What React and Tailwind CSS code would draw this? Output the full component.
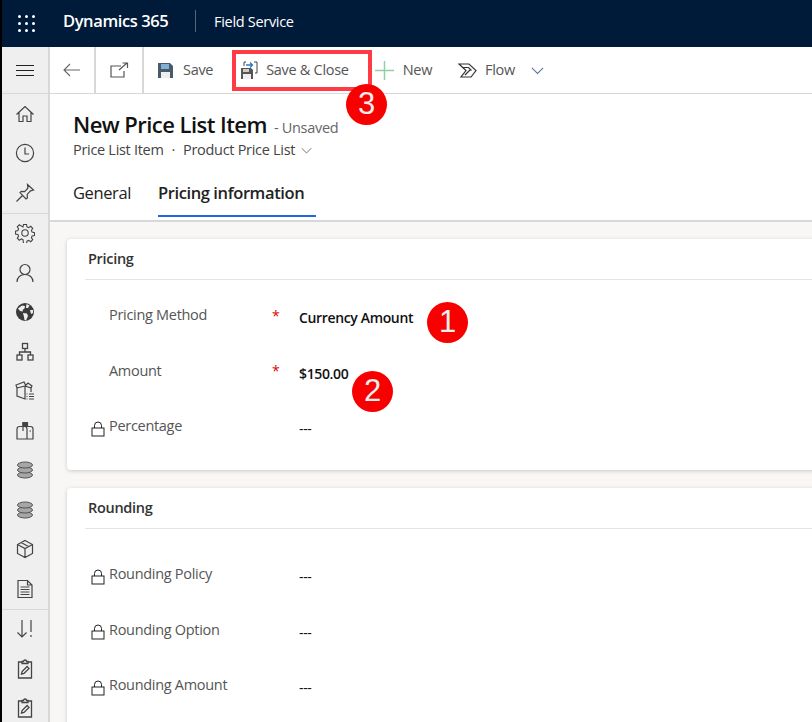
import React from 'react';

const font = { fontFamily: '"Open Sans", "Noto Sans", sans-serif' };

// sidebar icons, all drawn on a 20x20 box
function HomeIcon() {
  return (
    <svg width="20" height="20" viewBox="0 0 20 20" fill="none" stroke="#444" strokeWidth="1.2">
      <path d="M1.5 10.5 10 2.5l8.5 8M4 8.5V17.5h4V12h4v5.5h4V8.5" />
    </svg>
  );
}
function ClockIcon() {
  return (
    <svg width="20" height="20" viewBox="0 0 20 20" fill="none" stroke="#444" strokeWidth="1.2">
      <circle cx="10" cy="10" r="8.6" />
      <path d="M10 4.5V11h4" />
    </svg>
  );
}
function PinIcon() {
  return (
    <svg width="20" height="20" viewBox="0 0 20 20" fill="none" stroke="#444" strokeWidth="1.2">
      <path d="M12.5 1.5 18.5 7l-3 .8-3.3 3.6.2 3.6-1.4 1L5 9.6l1.3-1.2 3.3.2 3.3-3.4zM7.5 12.5 1.5 18.5" />
    </svg>
  );
}
function GearIcon() {
  return (
    <svg width="20" height="20" viewBox="0 0 20 20" fill="none" stroke="#444" strokeWidth="1.1">
      <circle cx="10" cy="10" r="3.2" />
      <path d="M8.5 1.5h3l.5 2.4 1.6.7 2.1-1.3 2 2.1-1.3 2.1.7 1.6 2.4.5v2.9l-2.4.5-.7 1.6 1.3 2.1-2 2-2.1-1.3-1.6.7-.5 2.4h-3L8 16.6l-1.6-.7-2.1 1.3-2-2 1.3-2.1-.7-1.6-2.4-.5V8.1l2.4-.5.7-1.6-1.3-2.1 2-2.1 2.1 1.3L8 3.9z" />
    </svg>
  );
}
function PersonIcon() {
  return (
    <svg width="20" height="20" viewBox="0 0 20 20" fill="none" stroke="#444" strokeWidth="1.2">
      <circle cx="10" cy="6.5" r="5" />
      <path d="M2 19c0-4.5 3.5-7.5 8-7.5s8 3 8 7.5" />
    </svg>
  );
}
function GlobeIcon() {
  return (
    <svg width="20" height="20" viewBox="0 0 20 20">
      <circle cx="10" cy="10" r="9" fill="#3a3a3a" />
      <path d="M3 6.5 7 3.5l3 .5-.5 2.5L7.5 8 8 9.5 5 9zM11.5 2l3 1.5L13 6h-2zM8 11l4 .5 1 2.5-2 4.5-1.5-.5-.5-3zM15 8h3v3l-2 1z" fill="#efefef" />
    </svg>
  );
}
function OrgIcon() {
  return (
    <svg width="20" height="20" viewBox="0 0 20 20" fill="none" stroke="#444" strokeWidth="1.3">
      <rect x="7.5" y="1.5" width="5" height="5" />
      <rect x="2" y="13" width="5" height="5" />
      <rect x="13" y="13" width="5" height="5" />
      <path d="M10 6.5V10M4.5 13v-3h11v3" />
    </svg>
  );
}
function BoxListIcon() {
  return (
    <svg width="20" height="20" viewBox="0 0 20 20" fill="none" stroke="#444" strokeWidth="1.2">
      <path d="M2 7l8-2v13l-8-3zM10 5l6 2v4M2 7 1 4l8-3 2 4M10 5l3-3 4 3-1 2" />
      <path d="M11.5 13h1M14 13h5M11.5 15.5h1M14 15.5h5M11.5 18h1M14 18h5" />
    </svg>
  );
}
function MailboxIcon() {
  return (
    <svg width="20" height="20" viewBox="0 0 20 20" fill="none" stroke="#444" strokeWidth="1.2">
      <path d="M2 18V8c0-1.5 1-2.5 2.5-2.5h11C17 5.500 18 6.500 18 8v10zM12 18V8c0-1.500-1-2.500-2.500-2.500M8 10V1.500" />
      <path d="M8 1.500h4.500v3H8z" fill="#444" />
      <path d="M14.500 10h1.500" />
    </svg>
  );
}
function DbIcon() {
  return (
    <svg width="20" height="20" viewBox="0 0 20 20" fill="#a6a6a6" stroke="#555" strokeWidth="1">
      <ellipse cx="10" cy="15" rx="7.500" ry="3" />
      <ellipse cx="10" cy="10" rx="7.500" ry="3" />
      <ellipse cx="10" cy="5" rx="7.500" ry="3" />
    </svg>
  );
}
function CubeIcon() {
  return (
    <svg width="20" height="20" viewBox="0 0 20 20" fill="none" stroke="#444" strokeWidth="1.2">
      <path d="M10 1.500 17.500 5.500v9L10 18.500l-7.500-4v-9zM2.500 5.500 10 9.500l7.500-4M10 9.500v9M6 3.500l7.500 4" />
    </svg>
  );
}
function DocIcon() {
  return (
    <svg width="20" height="20" viewBox="0 0 20 20" fill="none" stroke="#444" strokeWidth="1.2">
      <path d="M3 1.500h9.500L17 6v12.500H3zM12.500 1.500V6H17" />
      <path d="M5.500 8h9M5.500 10.500h9M5.500 13h9M5.500 15.500h9" strokeWidth="1" />
    </svg>
  );
}
function SortIcon() {
  return (
    <svg width="20" height="20" viewBox="0 0 20 20" fill="none" stroke="#444" strokeWidth="1.2">
      <path d="M7 1v17M2.500 13.500 7 18l4.500-4.500M16 1v12M16 16v2" />
    </svg>
  );
}
function ClipboardIcon() {
  return (
    <svg width="20" height="20" viewBox="0 0 20 20" fill="none" stroke="#444" strokeWidth="1.3">
      <path d="M7 3H3.500v16h13V3H13M7 4.500V2.500h1.500a1.500 1.500 0 0 1 3 0H13v2z" />
      <path d="m6.500 15 .6-2.500 5-5 1.900 1.900-5 5z" />
    </svg>
  );
}

function LockIcon() {
  return (
    <svg width="14" height="16" viewBox="0 0 14 16" fill="none" stroke="#222" strokeWidth="1">
      <rect x="1" y="7" width="12" height="8" />
      <path d="M3.500 7V4.500a3.500 3.500 0 0 1 7 0V7" />
    </svg>
  );
}

function Chevron({ size = 12, color = '#555' }) {
  return (
    <svg width={size} height={size} viewBox="0 0 12 12" fill="none" stroke={color} strokeWidth="1">
      <path d="M.8 3.500 6 8.700l5.200-5.200" />
    </svg>
  );
}

function SideItem({ children }) {
  return <div className="h-[39.5px] flex items-center justify-center shrink-0">{children}</div>;
}

function Badge({ n, className }) {
  return (
    <div className={`absolute w-[41px] h-[41px] rounded-full bg-[#f80000] text-[#eee] flex items-center justify-center text-[31px] ${className}`} style={{ fontFamily: '"Liberation Sans", sans-serif' }}>
      {n}
    </div>
  );
}

function Field({ label, value, locked, required, bold, className }) {
  return (
    <div className={`flex items-center h-[55.5px] ${className || ''}`}>
      <div className="w-[24px] flex justify-start pl-[6px]">{locked && <LockIcon />}</div>
      <div className="w-[163px] text-[14.5px] text-[#555] tracking-[-0.3px] -mt-[5px]">{label}</div>
      <div className="w-[27px] text-[#d00] text-[14px] -mt-[5px]">{required && '*'}</div>
      <div className={`text-[14px] tracking-[-0.35px] text-[#111] ${bold ? 'font-semibold' : ''}`}>{value}</div>
    </div>
  );
}

export default function App() {
  return (
    <div className="relative w-[812px] h-[722px] overflow-hidden bg-white flex flex-col border-l-2 border-black" style={font}>
      {/* top bar */}
      <div className="h-[47px] shrink-0 bg-[#001a3a] flex items-center text-white">
        <div className="w-[61px] pl-[16px]">
          <div className="grid grid-cols-3 gap-[4px] w-[17px]">
            {[0, 1, 2, 3, 4, 5, 6, 7, 8].map(i => <span key={i} className="w-[3px] h-[3px] rounded-full bg-white" />)}
          </div>
        </div>
        <div className="text-[16.5px] font-semibold tracking-[-0.4px] w-[132px] -mt-[4px]">Dynamics 365</div>
        <div className="w-px h-[22px] bg-[#56657c] -mt-[5px]" />
        <div className="ml-[18px] text-[14.5px] tracking-[-0.3px] -mt-[4px]">Field Service</div>
      </div>

      {/* command bar */}
      <div className="h-[47px] shrink-0 flex items-center border-b border-[#d8d8d8]">
        <div className="w-[48px] h-full bg-[#efefef] border-r-2 border-[#d8d8d8] flex items-center justify-center">
          <div className="w-[18px] flex flex-col gap-[4px]">
            <span className="h-px bg-[#222]" />
            <span className="h-px bg-[#222]" />
            <span className="h-px bg-[#222]" />
          </div>
        </div>
        <div className="w-[46px] h-full border-r-2 border-[#d8d8d8] flex items-center justify-center">
          <svg width="18" height="14" viewBox="0 0 18 14" fill="none" stroke="#666" strokeWidth="1.100">
            <path d="M17 7H1M7 1 1 7l6 6" />
          </svg>
        </div>
        <div className="w-[48px] h-full border-r-2 border-[#d8d8d8] flex items-center justify-center">
          <svg width="19" height="16" viewBox="0 0 19 16" fill="none" stroke="#555" strokeWidth="1.200">
            <path d="M11 4H1v11h13V9M9 8l8-7M12.500 1H17.500V6" />
          </svg>
        </div>
        <div className="flex items-center ml-[13px] text-[14.5px] tracking-[-0.3px] text-[#555]">
          <svg width="17" height="17" viewBox="0 0 17 17">
            <path d="M1 1h12l3 3v12H1z" fill="#4a5a6a" />
            <rect x="4" y="2" width="8" height="5" fill="#7fb0d8" />
            <rect x="4" y="10" width="9" height="6" fill="#eee" />
          </svg>
          <span className="ml-[9px] -mt-[1px]">Save</span>
        </div>
        <div className="flex items-center ml-[27px] text-[14.5px] tracking-[-0.3px] text-[#555]">
          <svg width="18" height="19" viewBox="0 0 18 19" fill="none">
            <path d="M1 7h10l2 2v9H1z" fill="#555" />
            <rect x="3" y="8" width="6" height="3" fill="#ccc" />
            <rect x="3" y="13" width="8" height="5" fill="#eee" />
            <path d="M4 5V1h2M14 1h3v11h-2" stroke="#444" strokeWidth="1" />
            <path d="M6 4h6M10 1.500 12.500 4 10 6.500" stroke="#2b79c2" strokeWidth="1.300" />
          </svg>
          <span className="ml-[8px] -mt-[1px]">Save &amp; Close</span>
        </div>
        <div className="flex items-center ml-[26px] text-[14.5px] tracking-[-0.3px] text-[#555]">
          <svg width="19" height="19" viewBox="0 0 19 19" fill="none" stroke="#8fd0a4" strokeWidth="1.500">
            <path d="M9.500 0v19M0 9.500h19" />
          </svg>
          <span className="ml-[9px] -mt-[1px]">New</span>
        </div>
        <div className="flex items-center ml-[26px] text-[14.5px] tracking-[-0.3px] text-[#555]">
          <svg width="19" height="15" viewBox="0 0 19 15" fill="none" stroke="#333" strokeWidth="1.200">
            <path d="M1 1h10l7 6.500-5 6.500H3l5-6.500zM4.500 4.500h6l3 3M7 12l5-5" />
          </svg>
          <span className="ml-[8px] -mt-[1px]">Flow</span>
          <span className="ml-[16px]"><Chevron size={13} color="#5a7a9a" /></span>
        </div>
      </div>

      <div className="flex flex-1 min-h-0">
        {/* side nav */}
        <div className="w-[48px] shrink-0 bg-[#efefef] border-r-2 border-[#d8d8d8] flex flex-col">
          <SideItem><HomeIcon /></SideItem>
          <SideItem><ClockIcon /></SideItem>
          <SideItem><PinIcon /></SideItem>
          <div className="h-px bg-[#d8d8d8] shrink-0" />
          <SideItem><GearIcon /></SideItem>
          <SideItem><PersonIcon /></SideItem>
          <SideItem><GlobeIcon /></SideItem>
          <SideItem><OrgIcon /></SideItem>
          <SideItem><BoxListIcon /></SideItem>
          <SideItem><MailboxIcon /></SideItem>
          <SideItem><DbIcon /></SideItem>
          <SideItem><DbIcon /></SideItem>
          <SideItem><CubeIcon /></SideItem>
          <SideItem><DocIcon /></SideItem>
          <div className="h-px bg-[#d8d8d8] shrink-0" />
          <SideItem><SortIcon /></SideItem>
          <SideItem><ClipboardIcon /></SideItem>
          <SideItem><ClipboardIcon /></SideItem>
        </div>

        {/* form */}
        <div className="flex-1 min-w-0 flex flex-col">
          <div className="h-[128px] shrink-0 border-b-2 border-[#d8d8d8] pl-[23px] pt-[15px]">
            <div className="flex items-baseline">
              <span className="text-[22px] font-semibold leading-[30px] tracking-[-0.55px] text-[#111]">New Price List Item</span>
              <span className="ml-[7px] text-[14.5px] tracking-[-0.3px] text-[#666]">- Unsaved</span>
            </div>
            <div className="flex items-center text-[14.5px] leading-[22px] tracking-[-0.3px] text-[#444] font-medium">
              <span>Price List Item</span>
              <span className="mx-[8px]">·</span>
              <span>Product Price List</span>
              <span className="ml-[6px]"><Chevron size={11} color="#666" /></span>
            </div>
            <div className="flex mt-[18px] text-[16.5px] leading-[24px] tracking-[-0.4px] text-[#222]">
              <div className="w-[85px] pt-[2px]">General</div>
              <div className="font-semibold pt-[2px] pb-[10px] border-b-2 border-[#2266e3] w-[158px] whitespace-nowrap">Pricing information</div>
            </div>
          </div>

          <div className="flex-1 bg-[#f8f7f6] pl-[17px] pt-[17px] flex flex-col gap-[18px] overflow-hidden">
            <div className="h-[231px] shrink-0 -mr-[10px] bg-white rounded-[4px] shadow-[0_1px_4px_rgba(0,0,0,0.18)] pl-[18px]">
              <div className="h-[41px] border-b border-[#e4e4e4] flex items-center pl-[3px] text-[14.5px] font-semibold tracking-[-0.3px] text-[#333]">Pricing</div>
              <div className="pt-[10px]">
                <Field label="Pricing Method" value="Currency Amount" required bold />
                <Field label="Amount" value="$150.00" required bold />
                <Field label="Percentage" value="---" locked />
              </div>
            </div>
            <div className="h-[260px] shrink-0 -mr-[10px] bg-white rounded-[4px] shadow-[0_1px_4px_rgba(0,0,0,0.18)] pl-[18px]">
              <div className="h-[41px] border-b border-[#e4e4e4] flex items-center pl-[3px] text-[14.5px] font-semibold tracking-[-0.3px] text-[#333]">Rounding</div>
              <div className="pt-[20px]">
                <Field label="Rounding Policy" value="---" locked />
                <Field label="Rounding Option" value="---" locked />
                <Field label="Rounding Amount" value="---" locked />
              </div>
            </div>
          </div>
        </div>
      </div>

      {/* annotations over the screenshot */}
      <div className="absolute left-[230px] top-[50px] w-[140px] h-[41px] border-4 border-[#ff3b45]" />
      <Badge n="3" className="left-[344px] top-[84px]" />
      <Badge n="1" className="left-[425px] top-[302px]" />
      <Badge n="2" className="left-[350px] top-[371px]" />
    </div>
  );
}
